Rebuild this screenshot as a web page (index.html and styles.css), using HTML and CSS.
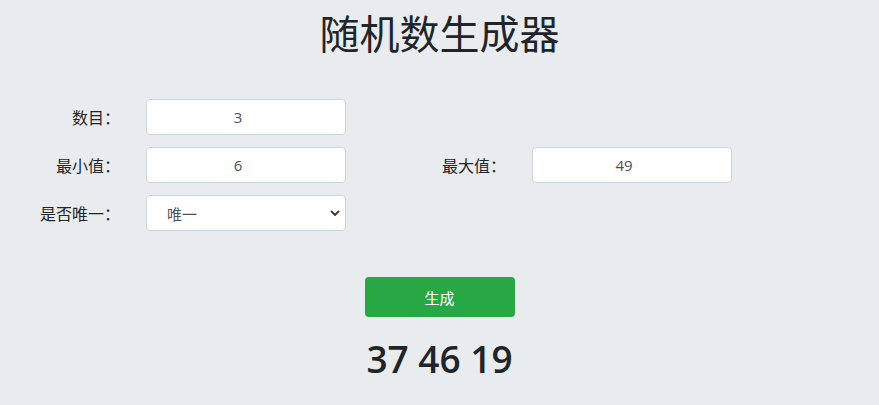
FILE: index.html
```html
<!DOCTYPE html>
<html lang="zh-CN">
<head>
<meta charset="utf-8">
<title>随机数生成器</title>
<link rel="stylesheet" href="styles.css">
</head>
<body>
<h1 class="title">随机数生成器</h1>
<form class="form">
  <label class="label" for="count">数目：</label>
  <input class="field num" id="count" type="text" value="3">
  <span></span><span></span>
  <label class="label" for="min">最小值：</label>
  <input class="field num" id="min" type="text" value="6">
  <label class="label" for="max">最大值：</label>
  <input class="field num" id="max" type="text" value="49">
  <label class="label" for="uniq">是否唯一：</label>
  <div class="select-wrap">
    <select class="field select" id="uniq">
      <option>唯一</option>
      <option>不唯一</option>
    </select>
    <svg class="chev" width="10" height="8" viewBox="0 0 10 8"><path d="M1.5 2.5 L5 6 L8.5 2.5" fill="none" stroke="#343a40" stroke-width="1.8" stroke-linecap="round" stroke-linejoin="round"/></svg>
  </div>
</form>
<div class="actions">
  <button class="btn" type="button">生成</button>
</div>
<div class="result">37 46 19</div>
</body>
</html>
```
FILE: styles.css
```css
html, body {
  margin: 0;
  padding: 0;
}
body {
  background: #e9ecef;
  color: #212529;
  font-family: "Open Sans", "Noto Sans CJK SC", sans-serif;
  width: 879px;
  height: 405px;
  overflow: hidden;
}
.title {
  margin: 8px 0 0;
  text-align: center;
  font-family: "Noto Sans CJK SC", sans-serif;
  font-weight: 400;
  font-size: 40px;
  line-height: 48px;
  color: #212529;
}
.form {
  margin-top: 43px;
  display: grid;
  grid-template-columns: 146px 200px 186px 200px;
  grid-auto-rows: 36px;
  row-gap: 12px;
  align-items: center;
}
.label {
  text-align: right;
  padding-right: 26px;
  font-family: "Noto Sans CJK SC", sans-serif;
  font-size: 16px;
  color: #212529;
}
.field {
  box-sizing: border-box;
  width: 200px;
  height: 36px;
  border: 1px solid #ced4da;
  border-radius: 4px;
  background: #fff;
  font-family: "Open Sans", "Noto Sans CJK SC", sans-serif;
  font-size: 15px;
  color: #495057;
  text-align: center;
  outline: none;
  margin: 0;
}
.num {
  padding: 0 16px 0 0;
}
.select-wrap {
  position: relative;
  width: 200px;
  height: 36px;
}
.select {
  -webkit-appearance: none;
  appearance: none;
  text-align: left;
  padding: 0 20px;
  font-family: "Noto Sans CJK SC", sans-serif;
}
.chev {
  position: absolute;
  right: 6px;
  top: 14px;
  pointer-events: none;
}
.actions {
  margin-top: 46px;
  display: flex;
  justify-content: center;
}
.btn {
  width: 150px;
  height: 40px;
  border: none;
  border-radius: 4px;
  background: #28a745;
  color: #fff;
  font-family: "Noto Sans CJK SC", sans-serif;
  font-size: 15px;
  margin: 0;
}
.result {
  margin-top: 20px;
  text-align: center;
  font-family: "Open Sans", sans-serif;
  font-weight: 600;
  font-size: 37px;
  line-height: 44px;
  color: #212529;
}
```
